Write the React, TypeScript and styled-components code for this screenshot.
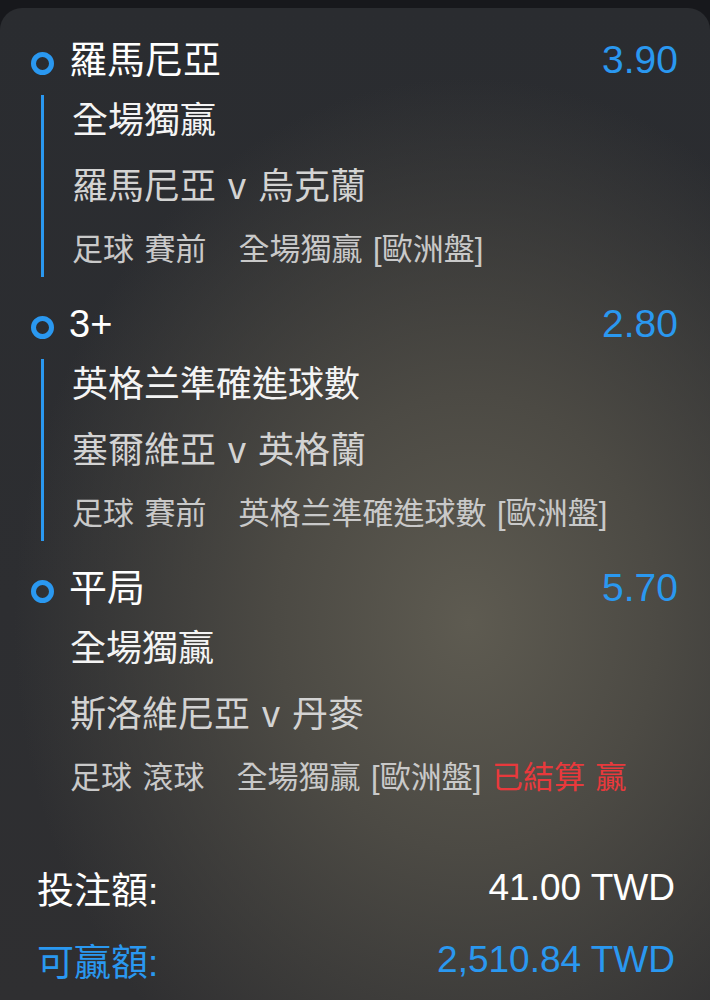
import React from "react";
import styled, { createGlobalStyle } from "styled-components";

const GlobalStyle = createGlobalStyle`
  html, body {
    margin: 0;
    padding: 0;
    background: #17181c;
  }
  body {
    font-family: "Liberation Sans", "Noto Sans CJK TC", sans-serif;
    -webkit-font-smoothing: antialiased;
  }
`;

const BLUE = "#2a98f0";

const Page = styled.div`
  width: 710px;
  height: 1000px;
  padding-top: 8px;
  box-sizing: border-box;
  background: #17181c;
  overflow: hidden;
`;

const Card = styled.div`
  height: 992px;
  box-sizing: border-box;
  border-radius: 22px 22px 0 0;
  padding: 21px 32px 0 31px;
  background:
    radial-gradient(ellipse 64% 55% at 66% 62%, #5e5b51 0%, #4c4a44 42%, rgba(46, 47, 51, 0) 100%),
    linear-gradient(180deg, #2a2c30 0%, #2d2e31 60%, #2f2f31 100%);
  display: flex;
  flex-direction: column;
`;

const Selection = styled.section`
  display: flex;
  flex-direction: column;
  margin-bottom: 13px;
`;

const Header = styled.div`
  display: flex;
  align-items: center;
  height: 62px;
`;

const Dot = styled.span`
  width: 23px;
  height: 23px;
  box-sizing: border-box;
  border-radius: 50%;
  border: 5px solid ${BLUE};
  margin-top: 6px;
  flex: none;
`;

const Title = styled.span`
  flex: 1;
  margin-left: 15px;
  font-size: 38px;
  line-height: 62px;
  color: #ffffff;
`;

const Odds = styled.span`
  font-size: 39px;
  line-height: 62px;
  color: ${BLUE};
`;

const Body = styled.div`
  display: flex;
  align-items: stretch;
`;

const Rail = styled.div<{ $show: boolean }>`
  width: 3px;
  margin: 4px 0 3px 10px;
  background: ${(p) => (p.$show ? BLUE : "transparent")};
  flex: none;
`;

const Lines = styled.div<{ $indent: number }>`
  display: flex;
  flex-direction: column;
  margin-left: ${(p) => p.$indent}px;
`;

const Market = styled.div`
  font-size: 36px;
  line-height: 60px;
  color: #f4f4f4;
`;

const Match = styled.div`
  font-size: 36px;
  line-height: 60px;
  margin-top: 6px;
  color: #d3d3d3;
  word-spacing: 2px;
`;

const Meta = styled.div`
  font-size: 31px;
  line-height: 60px;
  margin-top: 3px;
  color: #c9c9c9;
  white-space: pre;
  word-spacing: 2px;
`;

const Settled = styled.span`
  color: #e8393c;
`;

const Footer = styled.div`
  display: flex;
  flex-direction: column;
  margin-top: 31px;
  padding: 0 3px 0 6px;
`;

const SumRow = styled.div<{ $accent?: boolean }>`
  display: flex;
  justify-content: space-between;
  align-items: center;
  height: 72px;
  font-size: 37px;
  color: ${(p) => (p.$accent ? BLUE : "#ffffff")};
`;

type Pick = {
  name: string;
  odds: string;
  market: string;
  match: string;
  meta: string;
  result?: string;
  rail: boolean;
};

const picks: Pick[] = [
  {
    name: "羅馬尼亞",
    odds: "3.90",
    market: "全場獨贏",
    match: "羅馬尼亞 v 烏克蘭",
    meta: "足球 賽前   全場獨贏 [歐洲盤]",
    rail: true,
  },
  {
    name: "3+",
    odds: "2.80",
    market: "英格兰準確進球數",
    match: "塞爾維亞 v 英格蘭",
    meta: "足球 賽前   英格兰準確進球數 [歐洲盤]",
    rail: true,
  },
  {
    name: "平局",
    odds: "5.70",
    market: "全場獨贏",
    match: "斯洛維尼亞 v 丹麥",
    meta: "足球 滾球   全場獨贏 [歐洲盤]",
    result: " 已結算 贏",
    rail: false,
  },
];

export default function App() {
  return (
    <>
      <GlobalStyle />
      <Page>
        <Card>
          {picks.map((p) => (
            <Selection key={p.name}>
              <Header>
                <Dot />
                <Title>{p.name}</Title>
                <Odds>{p.odds}</Odds>
              </Header>
              <Body>
                <Rail $show={p.rail} />
                <Lines $indent={p.rail ? 28 : 26}>
                  <Market>{p.market}</Market>
                  <Match>{p.match}</Match>
                  <Meta>
                    {p.meta}
                    {p.result && <Settled>{p.result}</Settled>}
                  </Meta>
                </Lines>
              </Body>
            </Selection>
          ))}
          <Footer>
            <SumRow>
              <span>投注額:</span>
              <span>41.00 TWD</span>
            </SumRow>
            <SumRow $accent>
              <span>可贏額:</span>
              <span>2,510.84 TWD</span>
            </SumRow>
          </Footer>
        </Card>
      </Page>
    </>
  );
}
